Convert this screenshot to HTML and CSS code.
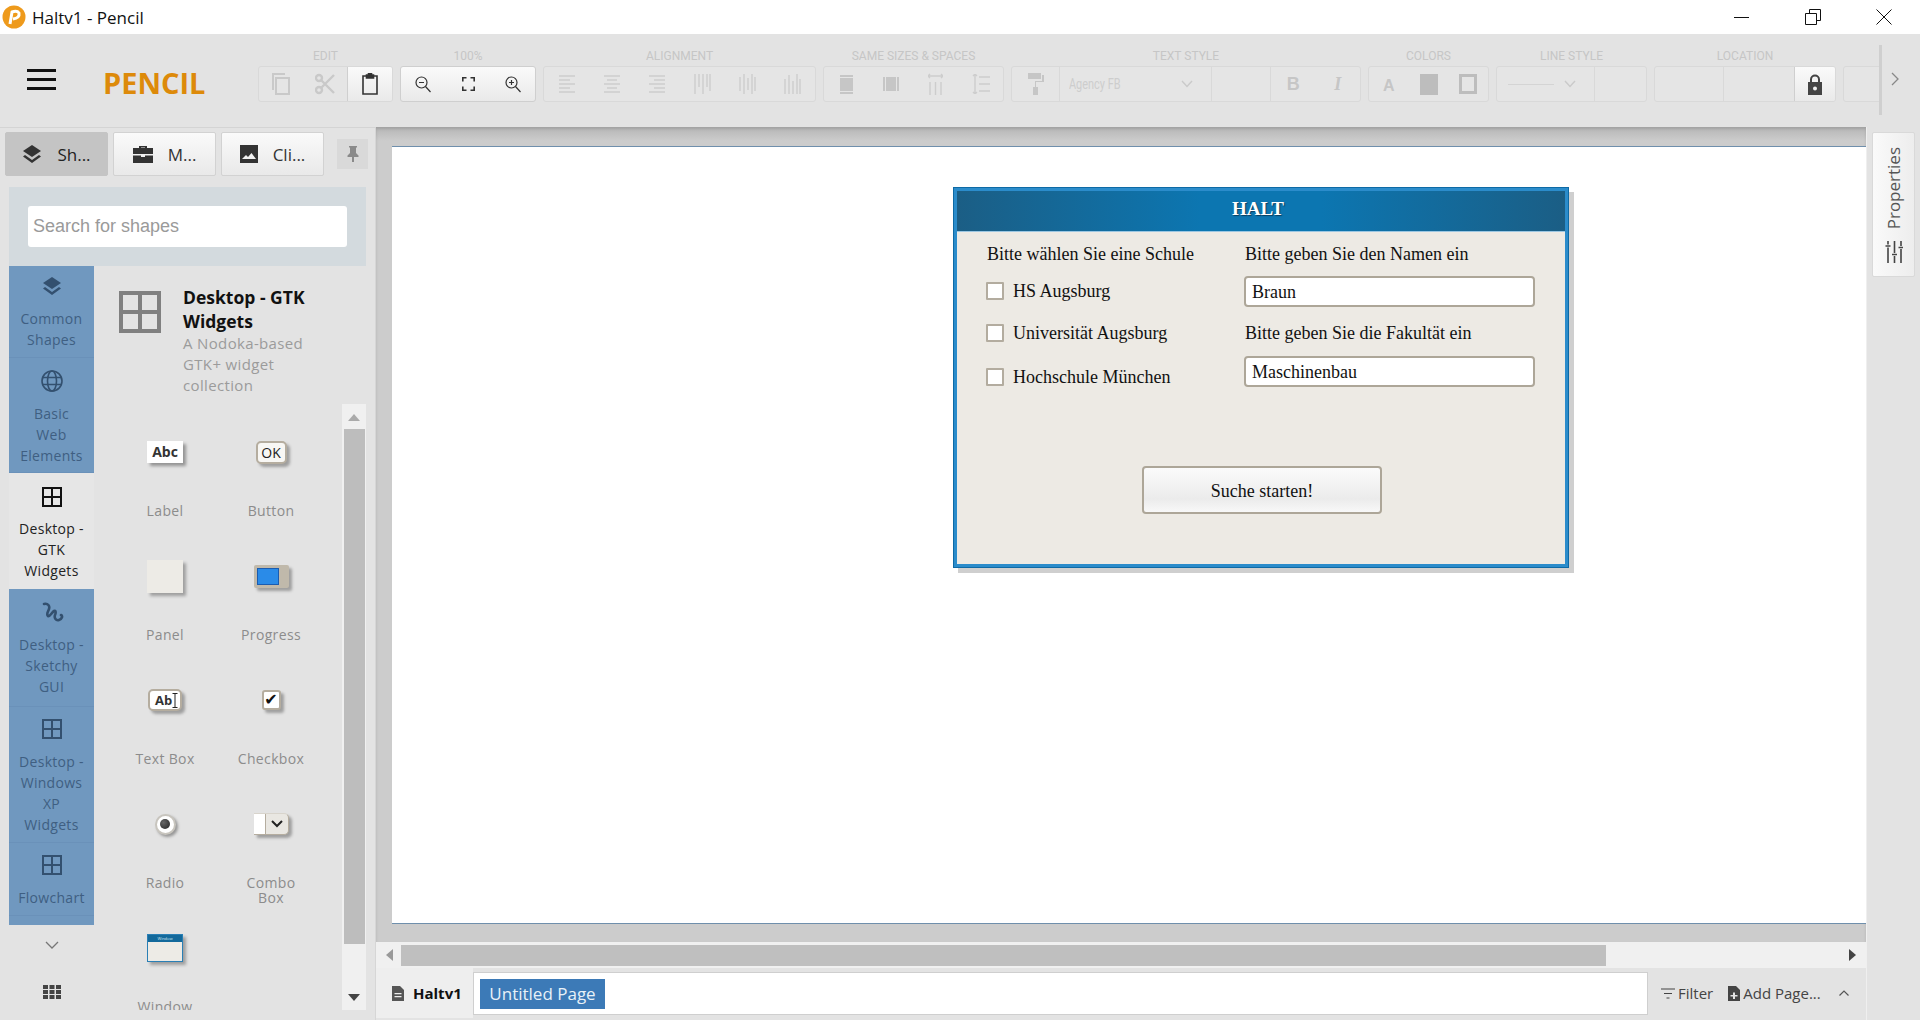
FILE: index.html
```html
<!DOCTYPE html>
<html>
<head>
<meta charset="utf-8">
<title>Haltv1 - Pencil</title>
<link rel="stylesheet" href="styles.css">
</head>
<body>
<div class="app">

  <div class="titlebar">
    <svg class="applogo" width="24" height="24" viewBox="0 0 24 24"><circle cx="12" cy="12" r="11.5" fill="#ee9a1c"/><path d="M8 19 L10 7 Q15 5 17 8 Q18 13 11 14" fill="none" stroke="#fff" stroke-width="3"/></svg>
    <span class="apptitle">Haltv1 - Pencil</span>
    <div class="winbtns">
      <svg width="16" height="16" viewBox="0 0 16 16"><path d="M0 8.500H15" stroke="#111" fill="none"/></svg>
      <svg width="16" height="16" viewBox="0 0 16 16"><path d="M.5 4.500H11.500V15.500H.5ZM4.500 4V.5H15.500V11.500H12" stroke="#111" fill="none"/></svg>
      <svg width="16" height="16" viewBox="0 0 16 16"><path d="M.5 .5L15.500 15.500M15.500 .5L.5 15.500" stroke="#111" fill="none"/></svg>
    </div>
  </div>

  <div class="toolbar">
    <div class="tb-scroll">
      <div class="menubtn"><i></i><i></i><i></i></div>
      <div class="brand">PENCIL</div>

      <div class="group g-edit">
        <div class="glabel">EDIT</div>
        <div class="gbox">
          <span class="cell"><svg width="18" height="22" viewBox="0 0 18 22" fill="none" stroke="#c9c9c9" stroke-width="2"><path d="M4 5H17V21H4ZM1 17V1H13"/></svg></span>
          <span class="cell"><svg width="20" height="22" viewBox="0 0 20 22" fill="none" stroke="#c9c9c9" stroke-width="2.400"><circle cx="4" cy="5" r="3"/><circle cx="4" cy="17" r="3"/><path d="M6 7L19 20M6 15L19 2"/></svg></span>
          <span class="cell cell-on"><svg width="16" height="22" viewBox="0 0 16 22" fill="none" stroke="#333" stroke-width="1.600"><path d="M4 3H1V21H15V3H12"/><path d="M4.500 5V2H6.500V.8H9.500V2H11.500V5Z" fill="#333"/></svg></span>
        </div>
      </div>

      <div class="group g-zoom">
        <div class="glabel">100%</div>
        <div class="gbox gbox-on">
          <span class="cell"><svg width="16" height="17" viewBox="0 0 16 17" fill="none" stroke="#333" stroke-width="1.200"><circle cx="6.500" cy="6.500" r="5.500"/><path d="M10.500 10.500L15.500 16M4 6.500H9"/></svg></span>
          <span class="cell"><svg width="13" height="14" viewBox="0 0 13 14" fill="none" stroke="#333" stroke-width="1.600"><path d="M.8 4.500V.8H4.500M8.500 .8H12.200V4.500M.8 9.500V13.200H4.500M8.500 13.200H12.200V9.500"/></svg></span>
          <span class="cell"><svg width="16" height="17" viewBox="0 0 16 17" fill="none" stroke="#333" stroke-width="1.200"><circle cx="6.500" cy="6.500" r="5.500"/><path d="M10.500 10.500L15.500 16M4 6.500H9M6.500 4V9"/></svg></span>
        </div>
      </div>

      <div class="group g-align">
        <div class="glabel">ALIGNMENT</div>
        <div class="gbox">
          <span class="cell"><svg width="16" height="18" viewBox="0 0 16 18" stroke="#cdcdcd" stroke-width="1.400"><path d="M0 1H16M0 5H11M0 9H16M0 13H11M0 17H16"/></svg></span>
          <span class="cell"><svg width="16" height="18" viewBox="0 0 16 18" stroke="#cdcdcd" stroke-width="1.400"><path d="M0 1H16M3 5H13M0 9H16M3 13H13M0 17H16"/></svg></span>
          <span class="cell"><svg width="16" height="18" viewBox="0 0 16 18" stroke="#cdcdcd" stroke-width="1.400"><path d="M0 1H16M5 5H16M0 9H16M5 13H16M0 17H16"/></svg></span>
          <span class="cell"><svg width="17" height="20" viewBox="0 0 17 20" stroke="#cdcdcd" stroke-width="1.400"><path d="M1 0V20M5 0V13M9 0V20M13 0V13M16 0V17"/></svg></span>
          <span class="cell"><svg width="17" height="20" viewBox="0 0 17 20" stroke="#cdcdcd" stroke-width="1.400"><path d="M1 3V17M5 0V20M9 4V16M13 0V20M16 3V17"/></svg></span>
          <span class="cell"><svg width="17" height="20" viewBox="0 0 17 20" stroke="#cdcdcd" stroke-width="1.400"><path d="M1 5V20M5 1V20M9 7V20M13 0V20M16 5V20"/></svg></span>
        </div>
      </div>

      <div class="group g-same">
        <div class="glabel">SAME SIZES &amp; SPACES</div>
        <div class="gbox">
          <span class="cell"><svg width="13" height="19" viewBox="0 0 13 19" fill="#c6c6c6"><rect width="13" height="2"/><rect y="3" width="13" height="13"/><rect y="17" width="13" height="2"/></svg></span>
          <span class="cell"><svg width="16" height="14" viewBox="0 0 16 14" fill="#c6c6c6"><rect width="2" height="14"/><rect x="3" width="10" height="14"/><rect x="14" width="2" height="14"/></svg></span>
          <span class="cell"><svg width="15" height="22" viewBox="0 0 15 22" fill="none" stroke="#cdcdcd" stroke-width="1.400"><path d="M0 3H15M2 1L0 3L2 5M13 1L15 3L13 5M2 9V22M7.500 9V22M13 9V22"/></svg></span>
          <span class="cell"><svg width="18" height="20" viewBox="0 0 18 20" fill="none" stroke="#cdcdcd" stroke-width="1.400"><path d="M3 0V20M1 2L3 0L5 2M1 18L3 20L5 18M7 3H18M7 10H18M7 17H18"/></svg></span>
        </div>
      </div>

      <div class="group g-text">
        <div class="glabel">TEXT STYLE</div>
        <div class="gbox">
          <span class="cell c-paint"><svg width="16" height="22" viewBox="0 0 16 22" fill="#c6c6c6"><path d="M0 0H13V6H0ZM14 2H16V9H8V14H10V22H5V14H7V8H14Z"/></svg></span>
          <span class="cell c-font"><span class="fontname">Agency FB</span><svg width="12" height="8" viewBox="0 0 12 8" fill="none" stroke="#cacaca" stroke-width="1.400"><path d="M1 1L6 6.500L11 1"/></svg></span>
          <span class="cell c-size"></span>
          <span class="cell c-sm"><span class="tb-b">B</span></span>
          <span class="cell c-sm"><span class="tb-i">I</span></span>
        </div>
      </div>

      <div class="group g-color">
        <div class="glabel">COLORS</div>
        <div class="gbox">
          <span class="cell"><span class="tb-a">A</span></span>
          <span class="cell"><span class="swatch-fill"></span></span>
          <span class="cell"><span class="swatch-line"></span></span>
        </div>
      </div>

      <div class="group g-line">
        <div class="glabel">LINE STYLE</div>
        <div class="gbox">
          <span class="cell c-linecombo"><span class="linepreview"></span><svg width="12" height="8" viewBox="0 0 12 8" fill="none" stroke="#cacaca" stroke-width="1.400"><path d="M1 1L6 6.500L11 1"/></svg></span>
          <span class="cell"></span>
        </div>
      </div>

      <div class="group g-loc">
        <div class="glabel">LOCATION</div>
        <div class="gbox">
          <span class="cell c-loc"></span>
          <span class="cell c-loc2"></span>
          <span class="cell c-lock cell-on"><svg width="14" height="21" viewBox="0 0 14 21"><path d="M3 9V5.500A4 4 0 0 1 11 5.500V9" fill="none" stroke="#444" stroke-width="2"/><path d="M0 8H14V21H0ZM7 12.500A2 2 0 1 0 7 16.500A2 2 0 1 0 7 12.500Z" fill="#444" fill-rule="evenodd"/></svg></span>
        </div>
      </div>

      <div class="group g-next">
        <div class="glabel">&nbsp;</div>
        <div class="gbox"></div>
      </div>
    </div>
    <div class="tb-more">
      <svg width="8" height="14" viewBox="0 0 8 14" fill="none" stroke="#888" stroke-width="1.300"><path d="M1 1L7 7L1 13"/></svg>
    </div>
  </div>

  <div class="main">

    <div class="leftpanel">
      <div class="tabs">
        <div class="tab tab-active">
          <svg width="20" height="20" viewBox="0 0 20 20" fill="#333"><path d="M10 1L19 7L10 13L1 7Z"/><path d="M3 11L1 12.500L10 19L19 12.500L17 11L10 16Z" /></svg>
          <span>Sh...</span>
        </div>
        <div class="tab">
          <svg width="20" height="18" viewBox="0 0 20 18" fill="#333"><path d="M6 3V1H14V3H20V9H0V3ZM8 3H12V2.500H8ZM0 10.500H8V12H12V10.500H20V18H0Z"/></svg>
          <span>M...</span>
        </div>
        <div class="tab">
          <svg width="18" height="18" viewBox="0 0 18 18"><path d="M0 0H18V18H0ZM2 14H16L11.500 8L8 12L6 10Z" fill="#333" fill-rule="evenodd"/></svg>
          <span>Cli...</span>
        </div>
        <div class="pinbtn"><svg width="12" height="16" viewBox="0 0 12 16" fill="#8a8a8a"><path d="M2 0H10V1.500H9V7L11.500 9.500V11H7V16H5V11H.5V9.500L3 7V1.500H2Z"/></svg></div>
      </div>

      <div class="searchwrap">
        <div class="searchbox">Search for shapes</div>
      </div>

      <div class="collections">
        <div class="sidebar">
          <div class="coll coll-first">
            <svg width="24" height="24" viewBox="-2 -2 24 24" fill="#33506f"><path d="M10 1L19 7L10 13L1 7Z"/><path d="M3 11L1 12.500L10 19L19 12.500L17 11L10 16Z"/></svg>
            <div>Common<br>Shapes</div>
          </div>
          <div class="coll coll-basic">
            <svg width="24" height="24" viewBox="0 0 24 24" fill="none" stroke="#33506f" stroke-width="1.600"><circle cx="12" cy="12" r="10"/><ellipse cx="12" cy="12" rx="4.500" ry="10"/><path d="M2.500 8.500H21.500M2.500 15.500H21.500"/></svg>
            <div>Basic<br>Web<br>Elements</div>
          </div>
          <div class="coll coll-active">
            <svg width="24" height="24" viewBox="-2 -2 24 24" fill="none" stroke="#111" stroke-width="2"><path d="M1 1H19V19H1ZM10 1V19M1 10H19"/></svg>
            <div>Desktop -<br>GTK<br>Widgets</div>
          </div>
          <div class="coll coll-sketchy">
            <svg width="24" height="24" viewBox="0 0 24 24" fill="none" stroke="#33506f" stroke-width="2.600" stroke-linecap="round"><path d="M4 4C8 3 10 6 9 9C8 12 6 14 8 16C10 17 12 12 14 11C16 10 16 13 15 15C14 18 16 21 19 20C22 19 23 16 21 15"/></svg>
            <div>Desktop -<br>Sketchy<br>GUI</div>
          </div>
          <div class="coll coll-tight">
            <svg width="24" height="24" viewBox="-2 -2 24 24" fill="none" stroke="#33506f" stroke-width="2"><path d="M1 1H19V19H1ZM10 1V19M1 10H19"/></svg>
            <div>Desktop -<br>Windows<br>XP<br>Widgets</div>
          </div>
          <div class="coll coll-tight coll-last">
            <svg width="24" height="24" viewBox="-2 -2 24 24" fill="none" stroke="#33506f" stroke-width="2"><path d="M1 1H19V19H1ZM10 1V19M1 10H19"/></svg>
            <div>Flowchart</div>
          </div>
          <div class="coll-sliver"></div>
          <div class="coll-more"><svg width="14" height="9" viewBox="0 0 14 9" fill="none" stroke="#777" stroke-width="1.300"><path d="M1 1L7 7L13 1"/></svg></div>
          <div class="coll-grid"><svg width="18" height="14" viewBox="0 0 18 14" fill="#444"><rect width="5" height="4"/><rect x="6.500" width="5" height="4"/><rect x="13" width="5" height="4"/><rect y="5" width="5" height="4"/><rect x="6.500" y="5" width="5" height="4"/><rect x="13" y="5" width="5" height="4"/><rect y="10" width="5" height="4"/><rect x="6.500" y="10" width="5" height="4"/><rect x="13" y="10" width="5" height="4"/></svg></div>
        </div>

        <div class="details">
          <div class="dhead">
            <svg width="42" height="42" viewBox="0 0 42 42" fill="none" stroke="#808080" stroke-width="4"><path d="M2 2H40V40H2ZM21 2V40M2 21H40"/></svg>
            <div class="dtext">
              <div class="dtitle">Desktop - GTK Widgets</div>
              <div class="ddesc">A Nodoka-based<br>GTK+ widget<br>collection</div>
            </div>
          </div>

          <div class="shapes-wrap">
            <div class="shapes">
              <div class="shape"><div class="sicon"><span class="s-abc">Abc</span></div><div class="sname">Label</div></div>
              <div class="shape"><div class="sicon"><span class="s-ok">OK</span></div><div class="sname">Button</div></div>
              <div class="shape"><div class="sicon"><span class="s-panel"></span></div><div class="sname">Panel</div></div>
              <div class="shape"><div class="sicon"><span class="s-progress"><i></i></span></div><div class="sname">Progress</div></div>
              <div class="shape"><div class="sicon"><span class="s-textbox">Ab<svg width="6" height="15" viewBox="0 0 6 15" fill="none" stroke="#222"><path d="M.5 .5H5.500M3 .5V14.500M.5 14.500H5.500"/></svg></span></div><div class="sname">Text Box</div></div>
              <div class="shape"><div class="sicon"><span class="s-check">&#10004;</span></div><div class="sname">Checkbox</div></div>
              <div class="shape"><div class="sicon"><span class="s-radio"><i></i></span></div><div class="sname">Radio</div></div>
              <div class="shape"><div class="sicon"><span class="s-combo"><i></i><svg width="12" height="8" viewBox="0 0 12 8" fill="none" stroke="#222" stroke-width="2"><path d="M1 1L6 6L11 1"/></svg></span></div><div class="sname">Combo<br>Box</div></div>
              <div class="shape"><div class="sicon"><span class="s-window"><i>Window</i></span></div><div class="sname">Window</div></div>
            </div>
            <div class="vscroll">
              <svg width="12" height="7" viewBox="0 0 12 7" fill="#aaa"><path d="M6 0L12 7H0Z"/></svg>
              <div class="vthumb"></div>
              <svg width="12" height="7" viewBox="0 0 12 7" fill="#444"><path d="M6 7L12 0H0Z"/></svg>
            </div>
          </div>
        </div>
      </div>
    </div>

    <div class="workspace">
      <div class="viewport">
        <div class="canvas">
          <div class="win">
            <div class="win-head">HALT</div>
            <div class="win-form">
              <div class="col-left">
                <div class="wlabel wlabel-head">Bitte wählen Sie eine Schule</div>
                <div class="wcheck"><span class="cbox"></span>HS Augsburg</div>
                <div class="wcheck"><span class="cbox"></span>Universität Augsburg</div>
                <div class="wcheck wcheck-last"><span class="cbox"></span>Hochschule München</div>
              </div>
              <div class="col-right">
                <div class="wlabel">Bitte geben Sie den Namen ein</div>
                <div class="winput winput-a">Braun</div>
                <div class="wlabel wlabel-b">Bitte geben Sie die Fakultät ein</div>
                <div class="winput winput-b">Maschinenbau</div>
              </div>
            </div>
            <div class="wbutton">Suche starten!</div>
          </div>
        </div>
      </div>

      <div class="hscroll">
        <svg width="7" height="12" viewBox="0 0 7 12" fill="#999"><path d="M0 6L7 0V12Z"/></svg>
        <div class="hthumb"></div>
        <svg width="7" height="12" viewBox="0 0 7 12" fill="#444"><path d="M7 6L0 0V12Z"/></svg>
      </div>

      <div class="pagebar">
        <div class="docname">
          <svg width="12" height="15" viewBox="0 0 12 15"><path d="M0 0H8L12 4V15H0ZM2.500 7V8.200H9.500V7ZM2.500 10V11.200H9.500V10Z" fill="#555" fill-rule="evenodd"/></svg>
          <b>Haltv1</b>
        </div>
        <div class="pagelist"><span class="pagetab">Untitled Page</span></div>
        <div class="pageact pa-filter">
          <svg width="14" height="11" viewBox="0 0 14 11" stroke="#444" stroke-width="1.200"><path d="M0 1H14M3 5.500H11M5.500 10H8.500"/></svg>Filter
        </div>
        <div class="pageact pa-add">
          <svg width="12" height="15" viewBox="0 0 12 15"><path d="M0 0H8L12 4V15H0ZM5 6.500V9H2.500V10.500H5V13H7V10.500H9.500V9H7V6.500Z" fill="#444" fill-rule="evenodd"/></svg>Add Page...
        </div>
        <div class="pageup"><svg width="10" height="6" viewBox="0 0 10 6" fill="none" stroke="#555" stroke-width="1.200"><path d="M.5 5.500L5 1L9.500 5.500"/></svg></div>
      </div>
    </div>

    <div class="rightpanel">
      <div class="proptab">
        <span class="proptext">Properties</span>
        <svg width="18" height="22" viewBox="0 0 18 22" stroke="#444" stroke-width="1.600" fill="none"><path d="M3 0V3.500M3 6.500V22M9.500 0V12M9.500 15V22M16 0V5M16 8V22M.5 5H5.500M7 13.500H12M13.500 6.500H18"/></svg>
      </div>
    </div>
  </div>
</div>
</body>
</html>
```

FILE: styles.css
```css
html, body {
    margin: 0;
    padding: 0;
    background: #fff;
}
.app {
    width: 1920px;
    height: 1020px;
    display: flex;
    flex-direction: column;
    overflow: hidden;
    font-family: "Open Sans", "Noto Sans", sans-serif;
    color: #333;
}

/* title bar */
.titlebar {
    height: 34px;
    flex: none;
    display: flex;
    align-items: center;
    padding-left: 2px;
    background: #fff;
}
.applogo {
    margin-right: 6px;
}
.apptitle {
    font-size: 17px;
    color: #111;
}
.winbtns {
    margin-left: auto;
    display: flex;
    gap: 55px;
    padding-right: 28px;
}

/* toolbar */
.toolbar {
    height: 93px;
    flex: none;
    display: flex;
    background: #e3e3e3;
}
.tb-scroll {
    width: 1880px;
    flex: none;
    display: flex;
    gap: 7px;
    padding-top: 14px;
    box-sizing: border-box;
    overflow: hidden;
}
.menubtn {
    flex: none;
    margin: 21px 0 0 27px;
    width: 29px;
    height: 21px;
    display: flex;
    flex-direction: column;
    justify-content: space-between;
}
.menubtn i {
    display: block;
    height: 3px;
    background: #111;
}
.brand {
    flex: none;
    width: 148px;
    margin: 17px 0 0 40px;
    font-size: 29px;
    line-height: 36px;
    font-weight: 700;
    color: #dd8a0a;
}
.group {
    flex: none;
}
.glabel {
    height: 14px;
    line-height: 14px;
    padding-top: 1px;
    margin-bottom: 3px;
    text-align: center;
    font-family: "Liberation Sans Narrow", Roboto, sans-serif;
    font-size: 12px;
    color: #c6c6c6;
    white-space: nowrap;
}
.gbox {
    height: 36px;
    display: flex;
    border: 1px solid #d9d9d9;
    border-radius: 3px;
    background: #e5e5e5;
    box-sizing: border-box;
    overflow: hidden;
}
.gbox-on {
    background: linear-gradient(#fafafa, #e9e9e9);
    border-color: #cfcfcf;
}
.cell {
    flex: 1;
    display: flex;
    align-items: center;
    justify-content: center;
    min-width: 0;
}
.cell-on {
    background: linear-gradient(#fafafa, #e9e9e9);
    border-left: 1px solid #cfcfcf;
}
.g-edit { width: 135px; }
.g-zoom { width: 136px; }
.g-align { width: 273px; }
.g-same { width: 181px; }
.g-text { width: 350px; }
.g-color { width: 121px; }
.g-line { width: 151px; }
.g-loc { width: 182px; }
.g-next { width: 60px; }
.c-paint {
    flex: none;
    width: 47px;
}
.c-font {
    flex: none;
    width: 152px;
    justify-content: space-between;
    padding: 0 18px 0 9px;
    box-sizing: border-box;
    border-left: 1px solid #d9d9d9;
}
.fontname {
    display: inline-block;
    width: 50px;
    font-family: "Liberation Sans Narrow", Roboto, sans-serif;
    font-size: 14px;
    white-space: nowrap;
    transform: scaleX(.78);
    transform-origin: left center;
    color: #cdcdcd;
}
.c-size {
    flex: none;
    width: 60px;
    border-left: 1px solid #d9d9d9;
    border-right: 1px solid #d9d9d9;
    box-sizing: border-box;
}
.c-sm {
    flex: 1;
}
.tb-b {
    font-family: "Liberation Sans", sans-serif;
    font-weight: bold;
    font-size: 18px;
    color: #c6c6c6;
}
.tb-i {
    font-family: "Liberation Serif", serif;
    font-weight: bold;
    font-style: italic;
    font-size: 18px;
    color: #c6c6c6;
}
.tb-a {
    font-family: "Liberation Sans", sans-serif;
    font-weight: bold;
    font-size: 16px;
    padding-top: 3px;
    color: #c6c6c6;
}
.swatch-fill {
    width: 18px;
    height: 21px;
    background: #bdbdbd;
}
.swatch-line {
    width: 18px;
    height: 20px;
    border: 3px solid #bdbdbd;
    box-sizing: border-box;
}
.c-linecombo {
    flex: none;
    width: 98px;
    justify-content: space-between;
    padding: 0 18px 0 11px;
    box-sizing: border-box;
    border-right: 1px solid #d9d9d9;
}
.linepreview {
    width: 46px;
    height: 1px;
    background: #d4d4d4;
}
.c-loc { flex: none; width: 68px; border-right: 1px solid #d9d9d9; }
.c-loc2 { flex: none; width: 70px; }
.c-lock { flex: 1; }
.tb-more {
    flex: 1;
    position: relative;
    padding: 38px 0 0 11px;
}
.tb-more::before {
    content: "";
    position: absolute;
    left: -1px;
    top: 11px;
    width: 3px;
    height: 70px;
    background: #cfcfcf;
}
.tb-more svg {
    display: block;
}

/* main row */
.main {
    flex: 1;
    display: flex;
    min-height: 0;
}
.leftpanel {
    width: 376px;
    flex: none;
    background: #e3e3e3;
    border-top: 1px solid #d4d4d4;
    box-sizing: border-box;
    border-right: 1px solid #d6d6d6;
}
.tabs {
    display: flex;
    align-items: center;
    gap: 5px;
    height: 44px;
    margin-top: 4px;
    padding-left: 5px;
}
.tab {
    width: 103px;
    height: 44px;
    box-sizing: border-box;
    display: flex;
    align-items: center;
    justify-content: center;
    gap: 15px;
    font-size: 17px;
    color: #333;
    background: linear-gradient(#fafafa, #e9e9e9);
    border: 1px solid #d2d2d2;
    border-radius: 2px;
}
.tab-active {
    background: #c4c4c4;
    border-color: #c4c4c4;
    color: #222;
}
.pinbtn {
    width: 31px;
    height: 30px;
    margin-left: 8px;
    display: flex;
    align-items: center;
    justify-content: center;
    background: #d9d9d9;
}
.searchwrap {
    margin: 11px 9px 0 9px;
    height: 79px;
    padding: 19px 19px 0;
    box-sizing: border-box;
    background: #d3dade;
}
.searchbox {
    height: 41px;
    line-height: 40px;
    padding-left: 5px;
    background: #fff;
    border-radius: 3px;
    font-family: "Liberation Sans", sans-serif;
    font-size: 18px;
    color: #9a9a9a;
}
.collections {
    display: flex;
    padding-left: 9px;
    height: 752px;
}
.sidebar {
    width: 85px;
    flex: none;
    font-size: 14px;
    letter-spacing: .3px;
    line-height: 21px;
    text-align: center;
    color: #3f5f82;
}
.coll {
    padding: 11px 0 7px;
    background: #7098bf;
    border-bottom: 1px solid #6a91b9;
    box-sizing: border-box;
}
.coll svg {
    display: block;
    margin: 0 auto 10px;
}
.coll-first {
    padding-top: 8px;
}
.coll-basic {
    padding-bottom: 6px;
}
.coll-sketchy {
    padding-bottom: 9px;
}
.coll-tight {
    padding-top: 10px;
}
.coll-active {
    padding: 12px 0 8px;
    background: #e6e6e6;
    color: #222;
    border-bottom: 0;
}
.coll-active svg {
    margin-bottom: 9px;
}
.coll-last {
    height: 73px;
}
.coll-sliver {
    height: 9px;
    background: #7098bf;
}
.coll-more {
    height: 40px;
    display: flex;
    align-items: center;
    justify-content: center;
}
.coll-grid {
    height: 54px;
    display: flex;
    align-items: center;
    justify-content: center;
}
.details {
    flex: 1;
    min-width: 0;
}
.dhead {
    height: 138px;
    display: flex;
    padding: 25px 0 0 25px;
    box-sizing: border-box;
    gap: 22px;
}
.dtext {
    width: 150px;
    margin-top: -6px;
}
.dtitle {
    font-size: 17.500px;
    font-weight: 700;
    line-height: 24px;
    color: #111;
}
.ddesc {
    font-size: 15px;
    letter-spacing: .35px;
    line-height: 21px;
    color: #9b9b9b;
}
.shapes-wrap {
    display: flex;
    height: 606px;
}
.shapes {
    width: 248px;
    flex: none;
    padding: 17px 0 0 18px;
    box-sizing: border-box;
    display: grid;
    grid-template-columns: 106px 106px;
    grid-auto-rows: 124px;
    overflow: hidden;
    align-content: start;
}
.sicon {
    height: 48px;
    margin-top: 7px;
    display: flex;
    align-items: center;
    justify-content: center;
}
.sname {
    margin-top: 27px;
    font-size: 14px;
    letter-spacing: .35px;
    line-height: 15px;
    text-align: center;
    color: #8c8c8c;
}
.s-abc {
    width: 36px;
    height: 22px;
    line-height: 22px;
    text-align: center;
    background: #fff;
    box-shadow: 3px 3px 3px rgba(0,0,0,.35);
    font-size: 14px;
    font-weight: 700;
    color: #333;
}
.s-ok {
    width: 31px;
    height: 23px;
    line-height: 19px;
    box-sizing: border-box;
    text-align: center;
    background: #f8f7f4;
    border: 2px solid #b5ad9f;
    border-radius: 5px;
    box-shadow: 3px 3px 3px rgba(0,0,0,.3);
    font-size: 14px;
    color: #222;
}
.s-panel {
    width: 36px;
    height: 33px;
    background: #edebe6;
    box-shadow: 3px 3px 3px rgba(0,0,0,.3);
}
.s-progress {
    width: 35px;
    height: 23px;
    padding: 3px;
    box-sizing: border-box;
    background: #c0b9ab;
    border-radius: 2px;
    box-shadow: 3px 3px 3px rgba(0,0,0,.3);
}
.s-progress i {
    display: block;
    width: 22px;
    height: 17px;
    box-sizing: border-box;
    background: #2a8be8;
    border: 1px solid #1b5cb0;
}
.s-textbox {
    width: 34px;
    height: 22px;
    line-height: 18px;
    box-sizing: border-box;
    padding-left: 5px;
    background: #fff;
    border: 2px solid #b5ad9f;
    border-radius: 5px;
    box-shadow: 3px 3px 3px rgba(0,0,0,.3);
    font-size: 13px;
    font-weight: 700;
    color: #333;
    display: flex;
    align-items: center;
}
.s-check {
    width: 19px;
    height: 20px;
    line-height: 16px;
    box-sizing: border-box;
    text-align: center;
    background: #fff;
    border: 2px solid #b5ad9f;
    border-radius: 3px;
    box-shadow: 3px 3px 3px rgba(0,0,0,.3);
    font-family: "DejaVu Sans", sans-serif;
    font-size: 16px;
    letter-spacing: 0;
    color: #111;
}
.s-radio {
    width: 21px;
    height: 21px;
    box-sizing: border-box;
    border: 2px solid #c8c5be;
    border-radius: 50%;
    background: #fff;
    display: flex;
    align-items: center;
    justify-content: center;
    box-shadow: 2px 2px 3px rgba(0,0,0,.35);
}
.s-radio i {
    display: block;
    width: 10px;
    height: 10px;
    border-radius: 50%;
    background: radial-gradient(circle at 35% 35%, #666, #222);
}
.s-combo {
    width: 35px;
    height: 22px;
    display: flex;
    align-items: center;
    background: #e9e7e2;
    border-radius: 0 5px 5px 0;
    box-shadow: 3px 3px 3px rgba(0,0,0,.3);
    border-right: 1px solid #b5ad9f;
    border-top: 1px solid #d8d4cc;
    border-bottom: 1px solid #b5ad9f;
    box-sizing: border-box;
}
.s-combo i {
    display: block;
    width: 11px;
    height: 100%;
    background: #fff;
    border-right: 1px solid #b5ad9f;
    margin-right: 5px;
}
.s-window {
    width: 36px;
    height: 28px;
    box-sizing: border-box;
    background: #edebe6;
    border: 1px solid #2a7fb5;
    box-shadow: 3px 3px 3px rgba(0,0,0,.3);
}
.s-window i {
    display: block;
    height: 7px;
    line-height: 7px;
    background: #13699b;
    font-style: normal;
    font-size: 4px;
    letter-spacing: 0;
    text-align: center;
    color: #cfe4f0;
}
.vscroll {
    width: 24px;
    flex: none;
    box-sizing: border-box;
    padding: 10px 2px 9px;
    background: #f0f0f0;
    display: flex;
    flex-direction: column;
    align-items: center;
}
.vthumb {
    width: 21px;
    height: 515px;
    margin: 8px 0 50px;
    background: #bdbdbd;
}

/* drawing area */
.workspace {
    flex: 1;
    min-width: 0;
    display: flex;
    flex-direction: column;
}
.viewport {
    flex: 1;
    display: flex;
    padding: 19px 0 18px 16px;
    background: linear-gradient(#b6b6b6, #cccccc 14px);
    box-shadow: inset 0 2px 3px rgba(0,0,0,.12);
}
.canvas {
    flex: 1;
    position: relative;
    background: #fff;
    border-top: 1px solid #6f8fac;
    border-bottom: 1px solid #6f8fac;
}
.win {
    position: absolute;
    left: 562px;
    top: 41px;
    width: 614px;
    height: 379px;
    box-sizing: border-box;
    border: 3px solid #2b8ccb;
    box-shadow: 0 0 0 1px #0e6aa5, 5px 5px 0 1px #cfcfcf;
    background: #edeae4;
    font-family: "Liberation Serif", serif;
    font-size: 18px;
    color: #111;
}
.win-head {
    height: 41px;
    line-height: 36px;
    padding-right: 6px;
    text-align: center;
    font-size: 19px;
    font-weight: bold;
    color: #fff;
    text-shadow: 1px 1px 1px #0a3d5c;
    background: linear-gradient(90deg, #1b5e85, #0c76b1 40%, #0c76b1 60%, #1b5e85);
    border-bottom: 1px solid #9cc7e2;
    box-sizing: border-box;
}
.win-form {
    display: flex;
    padding: 12px 0 0 29px;
}
.col-left {
    width: 258px;
    flex: none;
}
.wlabel {
    height: 20px;
    line-height: 20px;
}
.wlabel-head {
    margin-left: 1px;
}
.col-right .wlabel {
    margin-left: 1px;
}
.wlabel-b {
    margin-top: 16px;
}
.wcheck {
    display: flex;
    align-items: center;
    gap: 9px;
    height: 18px;
    margin-top: 24px;
}
.wcheck:nth-child(2) {
    margin-top: 18px;
}
.wcheck-last {
    margin-top: 26px;
}
.cbox {
    width: 18px;
    height: 18px;
    box-sizing: border-box;
    background: #fff;
    border: 2px solid #b3ac9f;
    border-radius: 1px;
    flex: none;
}
.winput {
    width: 291px;
    height: 31px;
    line-height: 28px;
    padding-left: 6px;
    box-sizing: border-box;
    background: #fff;
    border: 2px solid #ada698;
    border-radius: 4px;
}
.winput-a {
    margin-top: 12px;
}
.winput-b {
    margin-top: 13px;
}
.wbutton {
    margin: 79px 0 0 185px;
    width: 240px;
    height: 48px;
    line-height: 46px;
    box-sizing: border-box;
    text-align: center;
    border: 2px solid #ada698;
    border-radius: 4px;
    background: linear-gradient(#fbfbfb, #ebebeb 70%, #f8f8f8);
}

/* bottom scrollbar and pages */
.hscroll {
    height: 26px;
    flex: none;
    display: flex;
    align-items: center;
    padding: 0 10px;
    background: #f0f0f0;
}
.hthumb {
    width: 1205px;
    height: 21px;
    margin-left: 8px;
    margin-right: auto;
    background: #bfbfbf;
}
.pagebar {
    height: 52px;
    flex: none;
    display: flex;
    align-items: flex-start;
    background: #e3e3e3;
}
.docname {
    width: 97px;
    height: 50px;
    flex: none;
    display: flex;
    align-items: center;
    gap: 9px;
    padding-left: 16px;
    box-sizing: border-box;
    background: #eeeeee;
    font-size: 15px;
    color: #111;
}
.pagelist {
    width: 1175px;
    height: 43px;
    margin-top: 4px;
    flex: none;
    box-sizing: border-box;
    background: #fff;
    border: 1px solid #cfcfcf;
    padding: 6px 6px;
}
.pagetab {
    display: block;
    width: 125px;
    height: 30px;
    line-height: 30px;
    text-align: center;
    background: #3c7ab7;
    color: #e8f1f8;
    font-size: 17px;
}
.pageact {
    display: flex;
    align-items: center;
    height: 50px;
    font-size: 15px;
    color: #444;
    gap: 3px;
    white-space: nowrap;
}
.pa-filter {
    margin-left: 13px;
}
.pa-add {
    margin-left: 15px;
}
.pageup {
    margin-left: 18px;
    height: 50px;
    display: flex;
    align-items: center;
}

/* properties tab on the right */
.rightpanel {
    width: 54px;
    flex: none;
    background: #e3e3e3;
    padding: 5px 0 0 5px;
    box-sizing: border-box;
    border-left: 1px solid #efefef;
}
.proptab {
    width: 43px;
    height: 145px;
    box-sizing: border-box;
    background: linear-gradient(90deg, #fafafa, #ededed);
    border: 1px solid #d9d9d9;
    border-radius: 2px;
    display: flex;
    flex-direction: column;
    align-items: center;
    padding-top: 14px;
    gap: 12px;
}
.proptext {
    writing-mode: vertical-rl;
    transform: rotate(180deg);
    font-size: 17px;
    line-height: 20px;
    color: #555;
}
```
